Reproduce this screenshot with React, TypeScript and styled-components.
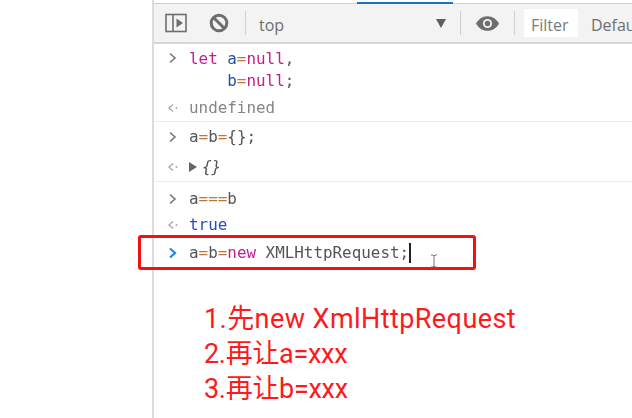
import React from "react";
import styled, { createGlobalStyle } from "styled-components";

const GlobalStyle = createGlobalStyle`
  html, body {
    margin: 0;
    padding: 0;
    background: #fff;
  }
  #root {
    width: 632px;
    height: 418px;
    overflow: hidden;
  }
`;

const Page = styled.div`
  position: relative;
  width: 632px;
  height: 418px;
  padding-left: 152px;
  box-sizing: border-box;
  overflow: hidden;
  background: #fff;
`;

const Panel = styled.div`
  height: 100%;
  border-left: 2px solid #dcdcdc;
  display: flex;
  flex-direction: column;
`;

const TabStrip = styled.div`
  height: 3px;
  padding-left: 203px;
  border-bottom: 1px solid #d0d0d0;
`;

const ActiveTab = styled.div`
  width: 96px;
  height: 2px;
  margin-top: 2px;
  background: #1a73c8;
`;

const Toolbar = styled.div`
  height: 38px;
  display: flex;
  align-items: center;
  background: #f3f3f3;
  border-bottom: 2px solid #d6d6d6;
  color: #6e6e6e;
  font-family: "Open Sans", "Noto Sans", sans-serif;
  font-size: 16px;
  white-space: nowrap;
  overflow: hidden;
`;

const ToolIcon = styled.svg<{ $left: number }>`
  flex: none;
  margin-left: ${(p) => p.$left}px;
`;

const Divider = styled.div<{ $left: number }>`
  flex: none;
  width: 1px;
  height: 24px;
  margin-left: ${(p) => p.$left}px;
  background: #d0d0d0;
`;

const Context = styled.div`
  flex: none;
  width: 188px;
  margin-left: 13px;
  display: flex;
  align-items: center;
  justify-content: space-between;
`;

const ToolLabel = styled.span`
  flex: none;
  padding-top: 3px;
`;

const Arrow = styled.div`
  width: 0;
  height: 0;
  margin-right: 1px;
  border-left: 5px solid transparent;
  border-right: 5px solid transparent;
  border-top: 9px solid #5f5f5f;
`;

const FilterBox = styled.div`
  flex: none;
  width: 54px;
  height: 28px;
  margin-left: 9px;
  padding-left: 7px;
  box-sizing: border-box;
  line-height: 32px;
  background: #fff;
  color: #7b7b7b;
`;

const Levels = styled(ToolLabel)`
  margin-left: 13px;
`;

const Log = styled.div`
  font-family: "DejaVu Sans Mono", "Liberation Mono", monospace;
  font-size: 15.9px;
  line-height: 22px;
  color: #555;
  filter: blur(0.35px);
`;

const Entry = styled.div<{ $height: number; $line?: boolean }>`
  height: ${(p) => p.$height}px;
  padding-left: 13px;
  box-sizing: border-box;
  display: flex;
  align-items: center;
  ${(p) => (p.$line ? "border-bottom: 1px solid #ececec;" : "")}
`;

const MultiEntry = styled(Entry)`
  align-items: flex-start;
  padding-top: 4px;
`;

const Gutter = styled.svg`
  flex: none;
  width: 12px;
  height: 12px;
  margin-right: 10px;
`;

const TopGutter = styled(Gutter)`
  margin-top: 4px;
`;

const Code = styled.pre`
  margin: 0;
  font: inherit;
  white-space: pre;
`;

const Keyword = styled.span`
  color: #c0208f;
`;
const Variable = styled.span`
  color: #2b4fb0;
`;
const Operator = styled.span`
  color: #b9773c;
`;
const Faded = styled.span`
  color: #858585;
`;

const Caret = styled.span`
  display: inline-block;
  width: 2px;
  height: 20px;
  vertical-align: -5px;
  background: #222;
`;

const Expand = styled.span`
  display: inline-block;
  width: 0;
  height: 0;
  margin-right: 5px;
  border-top: 5px solid transparent;
  border-bottom: 5px solid transparent;
  border-left: 8px solid #666;
`;

const Italic = styled.span`
  font-style: italic;
`;

const Highlight = styled.div`
  position: absolute;
  left: 138px;
  top: 235px;
  width: 338px;
  height: 35px;
  box-sizing: border-box;
  border: 3px solid #f5100f;
  border-radius: 3px;
`;

const TextCursor = styled.svg`
  position: absolute;
  left: 429px;
  top: 254px;
`;

const Notes = styled.div`
  margin-top: 31px;
  padding-left: 50px;
  font-family: Roboto, "Noto Sans CJK SC", sans-serif;
  font-size: 27px;
  line-height: 35px;
  color: #fe1a1a;
  white-space: nowrap;
`;

const NoteLine = styled.div<{ $tracking: number }>`
  letter-spacing: ${(p) => p.$tracking}px;
`;

const Chevron = ({ blue }: { blue?: boolean }) => (
  <Gutter viewBox="0 0 12 12">
    <path d="M3 1.5 8 6 3 10.5" fill="none" stroke={blue ? "#1a86e8" : "#777"} strokeWidth={blue ? 2.2 : 1.6} />
  </Gutter>
);

const Back = () => (
  <Gutter viewBox="0 0 12 12">
    <path d="M6 2.5 2 6l4 3.5" fill="none" stroke="#aaa" strokeWidth="1.4" />
    <circle cx="9.5" cy="6" r="1" fill="#aaa" />
  </Gutter>
);

export default function App() {
  return (
    <Page>
      <GlobalStyle />
      <Panel>
        <TabStrip>
          <ActiveTab />
        </TabStrip>
        <Toolbar>
          <ToolIcon $left={11} width="22" height="20" viewBox="0 0 22 20">
            <rect x="1" y="1.500" width="20" height="17" fill="none" stroke="#6e6e6e" strokeWidth="1.6" />
            <path d="M8 1.500v17" stroke="#6e6e6e" strokeWidth="1.6" />
            <path d="M11.500 5.500 18 10l-6.500 4.500z" fill="#6e6e6e" />
          </ToolIcon>
          <ToolIcon $left={22} width="20" height="20" viewBox="0 0 20 20">
            <circle cx="10" cy="10" r="7.800" fill="none" stroke="#6e6e6e" strokeWidth="3" />
            <path d="M4.500 4.500l11 11" stroke="#6e6e6e" strokeWidth="3" />
          </ToolIcon>
          <Divider $left={16} />
          <Context>
            <ToolLabel>top</ToolLabel>
            <Arrow />
          </Context>
          <Divider $left={13} />
          <ToolIcon $left={15} width="23" height="15" viewBox="0 0 25 16">
            <path d="M12.500 0C7 0 2.500 3.300 0 8c2.500 4.700 7 8 12.500 8S22.500 12.700 25 8C22.500 3.300 18 0 12.500 0z" fill="#6e6e6e" />
            <circle cx="12.500" cy="8" r="5" fill="#f3f3f3" />
            <circle cx="12.500" cy="8" r="3" fill="#6e6e6e" />
          </ToolIcon>
          <Divider $left={15} />
          <FilterBox>Filter</FilterBox>
          <Levels>Default</Levels>
        </Toolbar>
        <Log>
          <MultiEntry $height={50}>
            <TopGutter viewBox="0 0 12 12">
              <path d="M3 1.500 8 6 3 10.500" fill="none" stroke="#777" strokeWidth="1.6" />
            </TopGutter>
            <Code>
              <Keyword>let</Keyword> <Variable>a</Variable>
              <Operator>=</Operator>
              <Keyword>null</Keyword>,{"\n"}    <Variable>b</Variable>
              <Operator>=</Operator>
              <Keyword>null</Keyword>;
            </Code>
          </MultiEntry>
          <Entry $height={28} $line>
            <Back />
            <Faded>undefined</Faded>
          </Entry>
          <Entry $height={30}>
            <Chevron />
            <Code>
              a<Operator>=</Operator>b<Operator>=</Operator>
              {"{};"}
            </Code>
          </Entry>
          <Entry $height={30} $line>
            <Back />
            <Expand />
            <Italic>{"{}"}</Italic>
          </Entry>
          <Entry $height={33}>
            <Chevron />
            <Code>
              a<Operator>===</Operator>b
            </Code>
          </Entry>
          <Entry $height={20}>
            <Back />
            <Variable>true</Variable>
          </Entry>
          <Entry $height={36}>
            <Chevron blue />
            <Code>
              a<Operator>=</Operator>b<Operator>=</Operator>
              <Keyword>new</Keyword> XMLHttpRequest;
              <Caret />
            </Code>
          </Entry>
        </Log>
        <Notes>
          <NoteLine $tracking={0.43}>1.先new XmlHttpRequest</NoteLine>
          <NoteLine $tracking={-0.3}>2.再让a=xxx</NoteLine>
          <NoteLine $tracking={-0.3}>3.再让b=xxx</NoteLine>
        </Notes>
      </Panel>
      <Highlight />
      <TextCursor width="10" height="14" viewBox="0 0 10 14">
        <path d="M2 1h2l1 1 1-1h2M5 2v10M2 13h2l1-1 1 1h2" fill="none" stroke="#777" strokeWidth="1" />
      </TextCursor>
    </Page>
  );
}
